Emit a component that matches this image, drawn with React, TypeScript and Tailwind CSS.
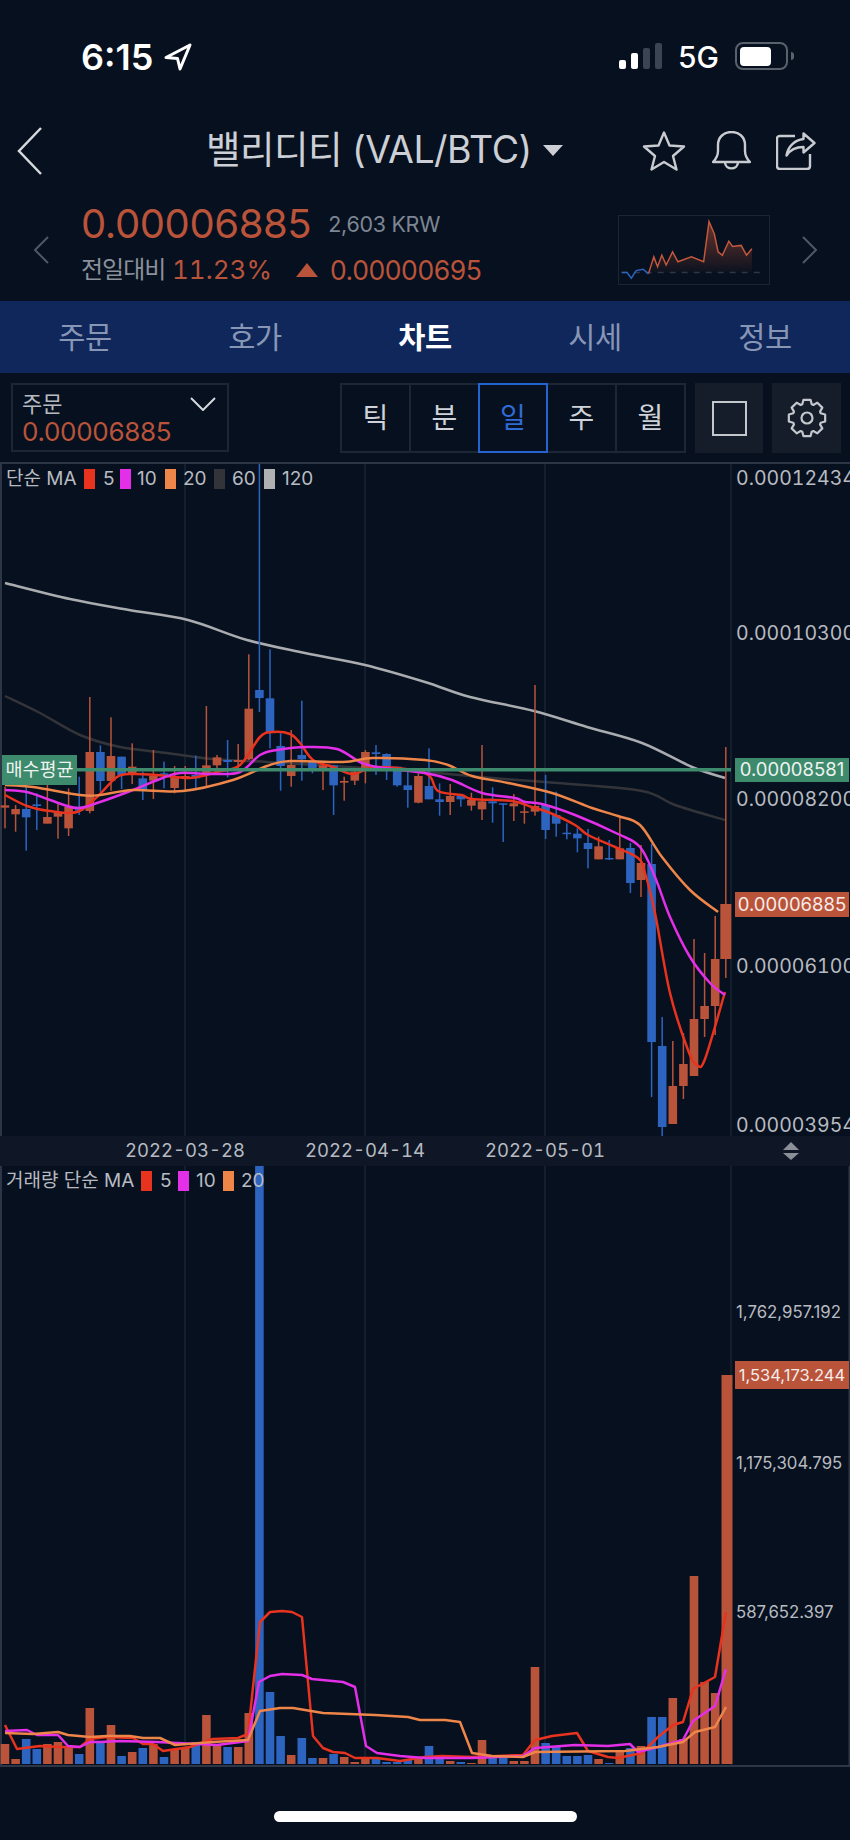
const RED = '#b9533a'
const BLUE = '#2c64c0'

// [wickTop, wickBottom, bodyTop, bodyBottom] in page pixels, r = up, b = down
type Candle = ['r' | 'b', number, number, number, number]

const z = (c: 'r' | 'b', a: number, b: number, d: number, e: number): Candle => [
  c,
  640 + a / 3,
  640 + b / 3,
  640 + d / 3,
  640 + e / 3,
]

const candles: Candle[] = [
  z('r', 440, 565, 496, 503),
  z('r', 495, 575, 507, 523),
  z('b', 420, 632, 507, 532),
  z('b', 460, 570, 493, 498),
  z('r', 435, 550, 531, 551),
  z('r', 492, 596, 517, 530),
  z('r', 445, 588, 501, 565),
  z('b', 410, 525, 500, 512),
  z('r', 171, 520, 336, 513),
  z('b', 316, 455, 336, 423),
  z('r', 232, 452, 348, 423),
  z('b', 350, 447, 350, 405),
  z('r', 310, 432, 380, 405),
  z('b', 395, 480, 415, 452),
  z('r', 330, 477, 408, 422),
  z('b', 365, 445, 400, 405),
  z('r', 378, 460, 408, 444),
  z('r', 378, 455, 408, 414),
  z('b', 347, 447, 405, 415),
  z('r', 198, 438, 376, 400),
  z('r', 345, 385, 352, 376),
  z('b', 300, 412, 360, 366),
  z('r', 312, 385, 360, 366),
  z('r', 43, 360, 206, 358),
  ['b', 463, 712, 690, 698],
  z('b', 28, 325, 175, 278),
  z('b', 280, 452, 318, 378),
  z('r', 270, 440, 375, 408),
  z('b', 182, 422, 345, 358),
  z('b', 360, 400, 362, 385),
  z('r', 365, 450, 376, 388),
  z('b', 375, 525, 376, 436),
  z('r', 410, 482, 423, 428),
  z('r', 385, 435, 395, 422),
  z('r', 330, 430, 336, 385),
  z('b', 315, 405, 337, 342),
  z('b', 340, 420, 342, 378),
  z('b', 380, 440, 380, 436),
  z('b', 395, 503, 436, 450),
  z('r', 400, 490, 408, 488),
  z('b', 325, 478, 438, 478),
  z('b', 430, 527, 478, 486),
  z('r', 432, 525, 468, 486),
  z('b', 465, 500, 468, 478),
  z('r', 458, 512, 480, 497),
  z('r', 315, 540, 484, 508),
  z('b', 442, 548, 484, 490),
  z('b', 490, 606, 490, 494),
  z('r', 462, 543, 490, 499),
  z('r', 495, 551, 514, 517),
  z('r', 135, 527, 498, 515),
  z('b', 405, 597, 495, 570),
  z('b', 455, 590, 525, 551),
  z('b', 550, 598, 578, 582),
  z('b', 565, 637, 581, 595),
  z('b', 567, 685, 609, 627),
  z('r', 590, 658, 619, 658),
  z('b', 600, 660, 654, 658),
  z('r', 532, 658, 625, 658),
  ['b', 843, 893, 848, 883],
  ['r', 845, 897, 863, 880],
  ['b', 844, 1097, 864, 1042],
  ['b', 1017, 1137, 1046, 1127],
  ['r', 1041, 1124, 1086, 1124],
  ['r', 1033, 1099, 1064, 1086],
  ['r', 939, 1076, 1019, 1076],
  ['r', 953, 1037, 1006, 1019],
  ['r', 916, 1035, 959, 1006],
  ['r', 747, 978, 904, 959],
]

// colour and top edge of each volume bar
const volumes: ['r' | 'b', number][] = [
  ['r', 1745], ['r', 1760], ['b', 1740], ['b', 1750], ['r', 1745], ['r', 1743], ['r', 1749], ['b', 1755],
  ['r', 1709], ['b', 1743], ['r', 1726], ['b', 1757], ['r', 1753], ['b', 1749], ['r', 1745], ['b', 1758],
  ['r', 1750], ['r', 1748], ['b', 1743], ['r', 1716], ['r', 1745], ['b', 1748], ['r', 1748], ['r', 1714],
  ['b', 1167], ['b', 1693], ['b', 1737], ['r', 1756], ['b', 1739], ['b', 1759], ['r', 1759], ['b', 1755],
  ['r', 1758], ['r', 1763], ['r', 1758], ['b', 1760], ['b', 1763], ['b', 1763], ['b', 1760], ['r', 1758],
  ['b', 1747], ['b', 1757], ['r', 1762], ['b', 1763], ['r', 1764], ['r', 1741], ['b', 1757], ['b', 1757],
  ['r', 1762], ['r', 1762], ['r', 1668], ['b', 1744], ['b', 1748], ['b', 1757], ['b', 1757], ['b', 1756],
  ['r', 1760], ['b', 1764], ['r', 1753], ['b', 1749], ['r', 1747], ['b', 1718], ['b', 1718], ['r', 1699],
  ['r', 1740], ['r', 1577], ['r', 1683], ['r', 1694], ['r', 1376],
]

const ma120 = '5,583 70,599 129,610 188,620 247,640 305,653 365,665 425,682 470,697 534,711 587,727 642,743 692,767 725,778'
const ma60 = '5,696 40,713 80,735 120,747 167,753 213,759 267,762 333,766 425,772 492,778 558,783 642,791 675,805 725,820'
const ma20 = '5,785 33,787 80,795 100,795 133,790 183,791 233,780 267,766 290,761 343,762 373,758 425,760 448,765 472,776 508,783 552,793 592,808 618,816 640,825 662,857 690,890 718,912'
const ma10 = '5,790 27,792 50,800 77,808 100,802 133,790 160,779 180,773 213,774 240,772 260,755 277,750 307,747 337,749 360,762 377,767 425,773 452,780 482,793 515,798 525,802 542,804 575,815 618,834 640,847 655,877 670,917 690,957 710,983 725,995'
const ma5 = '5,795 27,806 50,811 77,812 97,797 117,777 133,774 157,775 190,778 217,772 240,765 260,737 273,732 290,734 300,743 313,760 333,767 353,774 377,767 425,773 438,791 462,795 472,799 512,801 532,807 548,812 575,825 588,835 615,847 638,858 645,873 655,913 670,993 688,1050 697,1065 705,1059 725,992'

const vol5 = '5,1726 17,1750 40,1747 60,1748 80,1748 90,1740 107,1738 133,1739 143,1745 153,1745 163,1752 190,1748 213,1740 238,1739 248,1735 260,1623 270,1613 282,1612 292,1613 302,1618 313,1737 323,1749 333,1753 345,1754 355,1759 377,1759 400,1762 425,1758 442,1757 472,1758 523,1756 535,1741 552,1737 577,1734 588,1752 608,1758 618,1759 642,1754 658,1738 673,1726 683,1723 693,1690 715,1678 726,1613'
const vol10 = '5,1732 27,1731 37,1736 58,1736 68,1747 80,1748 90,1743 100,1743 120,1742 157,1743 177,1744 217,1746 248,1742 259,1683 270,1677 282,1675 302,1676 312,1680 343,1683 355,1688 366,1747 377,1754 400,1757 425,1759 472,1759 523,1757 535,1749 575,1746 608,1747 630,1745 638,1753 658,1748 683,1741 693,1722 715,1707 726,1670'
const vol20 = '5,1734 33,1735 58,1733 68,1736 90,1738 107,1737 130,1737 143,1739 160,1739 175,1746 213,1743 248,1741 260,1712 280,1709 293,1709 323,1714 375,1716 408,1718 420,1721 445,1721 460,1723 472,1754 492,1757 523,1758 535,1753 625,1752 658,1748 683,1743 695,1733 715,1728 726,1708'

const spark =
  '1145,818 1155,818 1163,835 1172,812 1185,808 1195,822 1205,770 1212,800 1220,765 1228,795 1240,755 1250,785 1275,770 1298,785 1308,662 1318,700 1325,755 1333,765 1345,722 1352,738 1368,735 1378,765 1388,745'

const centerX = (i: number) => 5 + 10.6 * i

// catmull-rom through the sampled points, the app draws its averages as curves
function smooth(points: string) {
  const p = points.split(' ').map((s) => s.split(',').map(Number))
  let d = `M${p[0][0]} ${p[0][1]}`
  for (let i = 0; i < p.length - 1; i++) {
    const a = p[Math.max(i - 1, 0)]
    const b = p[i]
    const c = p[i + 1]
    const e = p[Math.min(i + 2, p.length - 1)]
    d += ` C${b[0] + (c[0] - a[0]) / 6} ${b[1] + (c[1] - a[1]) / 6} ${c[0] - (e[0] - b[0]) / 6} ${c[1] - (e[1] - b[1]) / 6} ${c[0]} ${c[1]}`
  }
  return d
}

// eight blunt teeth around (20,20)
function gearPath() {
  const at = (deg: number, r: number) => {
    const a = ((deg - 90) * Math.PI) / 180
    return `${(20 + r * Math.cos(a)).toFixed(2)} ${(20 + r * Math.sin(a)).toFixed(2)}`
  }
  let d = ''
  for (let k = 0; k < 8; k++) {
    const t = k * 45
    d += `${k === 0 ? 'M' : 'L'}${at(t - 19, 14.5)} L${at(t - 11, 18.5)} L${at(t + 11, 18.5)} L${at(t + 19, 14.5)} `
  }
  return d + 'Z'
}

function Curve({ points, color, width = 2.5 }: { points: string; color: string; width?: number }) {
  return <path d={smooth(points)} fill="none" stroke={color} strokeWidth={width} strokeLinejoin="round" />
}

function Line({ points, color, width = 2.5 }: { points: string; color: string; width?: number }) {
  return <polyline points={points} fill="none" stroke={color} strokeWidth={width} strokeLinejoin="round" />
}

function GridLines({ y1, y2 }: { y1: number; y2: number }) {
  return (
    <>
      {[185, 365, 545, 731].map((x) => (
        <line key={x} x1={x} x2={x} y1={y1} y2={y2} stroke="#1a2433" strokeWidth={1.5} />
      ))}
    </>
  )
}

function AxisLabel({ top, children }: { top: number; children: string }) {
  return (
    <span className="absolute left-[736px] -translate-y-1/2 whitespace-nowrap text-[19.5px] leading-none tabular-nums text-[#b7bbc1]" style={{ top }}>
      {children}
    </span>
  )
}

function VolumeLabel({ top, children }: { top: number; children: string }) {
  return (
    <span className="absolute left-[736px] -translate-y-1/2 whitespace-nowrap text-[16.8px] leading-none text-[#b7bbc1]" style={{ top }}>
      {children}
    </span>
  )
}

function Swatch({ color }: { color: string }) {
  return <span className="h-[20px] w-[11px]" style={{ background: color }} />
}

export default function App() {
  const font = { fontFamily: 'Inter, "Noto Sans CJK KR", sans-serif' }

  return (
    <div className="h-[1840px] w-[850px] overflow-hidden bg-[#07101e] text-white" style={font}>
      {/* status bar */}
      <div className="flex h-[108px] items-start pl-[81px] pr-[56px] pt-[38px]">
        <span className="text-[36px] font-semibold leading-[38px]">6:15</span>
        <svg width="30" height="30" viewBox="0 0 30 30" className="ml-[10px] mt-[4px]">
          <path d="M27 3 L3 15.5 L14.5 16.5 L17 27 Z" fill="none" stroke="#fff" strokeWidth="3" strokeLinejoin="round" />
        </svg>
        <div className="ml-auto flex items-end gap-[5px] pb-[1px] pt-[5px]">
          <span className="h-[9px] w-[7px] rounded-[2px] bg-white" />
          <span className="h-[16px] w-[7px] rounded-[2px] bg-white" />
          <span className="h-[21px] w-[7px] rounded-[2px] bg-[#3a4452]" />
          <span className="h-[26px] w-[7px] rounded-[2px] bg-[#3a4452]" />
        </div>
        <span className="ml-[16px] text-[30px] font-medium leading-[38px]">5G</span>
        <div className="ml-[16px] mt-[4px] flex items-center gap-[3px]">
          <div className="flex h-[28px] w-[53px] items-center rounded-[8px] border-2 border-[#59616d] p-[3px]">
            <span className="h-[19px] w-[31px] rounded-[4px] bg-white" />
          </div>
          <span className="h-[8px] w-[3px] rounded-r-sm bg-[#59616d]" />
        </div>
      </div>

      {/* title row */}
      <div className="relative flex h-[85px] items-center">
        <svg width="26" height="48" viewBox="0 0 26 48" className="ml-[17px]">
          <path d="M24 1 L2 24 L24 47" fill="none" stroke="#d5d8dc" strokeWidth="2.5" />
        </svg>
        <span className="ml-[163px] text-[37.5px] font-normal tracking-[-0.5px] text-[#ccd0d6]">밸리디티 (VAL/BTC)</span>
        <span className="ml-[11px] h-0 w-0 border-x-[10px] border-t-[11px] border-x-transparent border-t-[#ccd0d6]" />
        <svg width="44" height="40" viewBox="0 0 44 40" className="ml-[79px]">
          <path d="M22 1.5 L27.5 14.5 L42 15.5 L31 25 L34.5 38.5 L22 31 L9.5 38.5 L13 25 L2 15.5 L16.5 14.5 Z" fill="none" stroke="#c8ccd1" strokeWidth="2.4" strokeLinejoin="round" />
        </svg>
        <svg width="39" height="40" viewBox="0 0 39 40" className="ml-[26px]">
          <path d="M1 31 C4 28 6 25 6 20 L6 14 C6 6 12 1 19.5 1 C27 1 33 6 33 14 L33 20 C33 25 35 28 38 31 Z" fill="none" stroke="#c8ccd1" strokeWidth="2.4" strokeLinejoin="round" />
          <path d="M13 31 C13 39.5 26 39.5 26 31" fill="none" stroke="#c8ccd1" strokeWidth="2.4" />
        </svg>
        <svg width="40" height="38" viewBox="0 0 40 38" className="ml-[25px]">
          <path d="M19 4 L4 4 Q1 4 1 7 L1 34 Q1 37 4 37 L31 37 Q34 37 34 34 L34 22" fill="none" stroke="#c8ccd1" strokeWidth="2.4" />
          <path d="M10.5 23.5 C12 14 19 8 27.5 7 L27.5 1.5 L38.5 11 L27.5 20.5 L27.5 15 C20 15 14 18 10.5 23.5 Z" fill="none" stroke="#c8ccd1" strokeWidth="2.4" strokeLinejoin="round" />
        </svg>
      </div>

      {/* price row */}
      <div className="flex h-[108px] items-start pt-[11px]">
        <svg width="16" height="28" viewBox="0 0 16 28" className="ml-[33px] mt-[32px]">
          <path d="M15 1 L2 14 L15 27" fill="none" stroke="#4d5868" strokeWidth="2" />
        </svg>
        <div className="ml-[32px] flex w-[537px] flex-col">
          <div className="flex items-start">
            <span className="text-[40px] leading-[40px] tracking-[-0.4px] text-[#b9533a]">0.00006885</span>
            <span className="ml-[17px] mt-[10px] text-[21.5px] leading-none tracking-[-0.3px] text-[#7d8694]">2,603 KRW</span>
          </div>
          <div className="mt-[12px] flex items-center">
            <span className="w-[91px] text-[24px] leading-[28px] tracking-[-1px] text-[#8a919c]">전일대비</span>
            <span className="text-[26px] leading-[28px] tabular-nums text-[#b9533a]">11.23%</span>
            <span className="ml-[24px] h-0 w-0 border-x-[11px] border-b-[14px] border-x-transparent border-b-[#b9533a]" />
            <span className="ml-[12px] text-[26.5px] leading-[28px] tracking-[-0.4px] text-[#b9533a]">0.00000695</span>
          </div>
        </div>
        <div className="mt-[11px] h-[70px] w-[152px] border border-[#1b2534]">
          <svg width="150" height="68" viewBox="1140 645 280 208" preserveAspectRatio="none">
            <defs>
              <linearGradient id="spark" x1="0" y1="0" x2="0" y2="1">
                <stop offset="0" stopColor="#b9533a" stopOpacity="0.55" />
                <stop offset="1" stopColor="#b9533a" stopOpacity="0.03" />
              </linearGradient>
            </defs>
            <polygon points={`1200,818 ${spark.split(' ').slice(6).join(' ')} 1388,818`} fill="url(#spark)" />
            <line x1="1145" x2="1410" y1="818" y2="818" stroke="#2c3646" strokeWidth="1.5" strokeDasharray="6 6" vectorEffect="non-scaling-stroke" />
            <polyline points={spark.split(' ').slice(5).join(' ')} fill="none" stroke="#c2573b" strokeWidth="1.5" vectorEffect="non-scaling-stroke" />
            <polyline points={spark.split(' ').slice(0, 6).join(' ')} fill="none" stroke="#2c64c0" strokeWidth="1.5" vectorEffect="non-scaling-stroke" />
          </svg>
        </div>
        <svg width="16" height="28" viewBox="0 0 16 28" className="ml-[32px] mt-[32px]">
          <path d="M1 1 L14 14 L1 27" fill="none" stroke="#4d5868" strokeWidth="2" />
        </svg>
      </div>

      {/* tabs */}
      <div className="grid h-[72px] grid-cols-5 items-center bg-[#10275b] text-center text-[29.5px] tracking-[-0.5px] text-[#8796b5]">
        <span>주문</span>
        <span>호가</span>
        <span className="font-bold text-white">차트</span>
        <span>시세</span>
        <span>정보</span>
      </div>

      {/* toolbar */}
      <div className="flex h-[89px] items-start pl-[11px] pt-[10px]">
        <div className="relative h-[69px] w-[218px] border-2 border-[#1c2636] pl-[9px] pt-[6px]">
          <div className="text-[22px] leading-[26px] text-[#b7bbc1]">주문</div>
          <div className="text-[26px] leading-[30px] tracking-[-0.3px] text-[#b9533a]">0.00006885</div>
          <svg width="26" height="14" viewBox="0 0 26 14" className="absolute right-[11px] top-[12px]">
            <path d="M1 1 L13 13 L25 1" fill="none" stroke="#d5d8dc" strokeWidth="2" />
          </svg>
        </div>
        <div className="ml-[111px] flex h-[70px] w-[346px] border-2 border-[#1c2636] text-[28px] text-[#cfd3d9]">
          <span className="flex flex-1 items-center justify-center border-r-2 border-[#1c2636]">틱</span>
          <span className="flex flex-1 items-center justify-center">분</span>
          <span className="-my-[2px] flex w-[70px] items-center justify-center border-2 border-[#2563d0] text-[#2f6bd6]">일</span>
          <span className="flex flex-1 items-center justify-center border-r-2 border-[#1c2636]">주</span>
          <span className="flex flex-1 items-center justify-center">월</span>
        </div>
        <div className="ml-[9px] flex h-[70px] w-[68px] items-center justify-center bg-[#151c2a]">
          <span className="h-[35px] w-[35px] border-[2.5px] border-[#c4c8cd]" />
        </div>
        <div className="ml-[9px] flex h-[70px] w-[69px] items-center justify-center bg-[#151c2a]">
          <svg width="40" height="40" viewBox="0 0 40 40">
            <path d={gearPath()} fill="none" stroke="#c4c8cd" strokeWidth="2.2" strokeLinejoin="round" />
            <circle cx="20" cy="20" r="5.5" fill="none" stroke="#c4c8cd" strokeWidth="2.2" />
          </svg>
        </div>
      </div>

      {/* price chart */}
      <div className="relative h-[674px] border-t-2 border-[#2c3646]">
        <svg width="850" height="672" viewBox="0 464 850 672" className="block">
          <rect x="0" y="464" width="2" height="672" fill="#2c3646" />
          <GridLines y1={464} y2={1136} />
          <Curve points={ma120} color="#a9adb0" />
          <Curve points={ma60} color="#33343a" />
          {candles.map(([c, wt, wb, bt, bb], i) => {
            const x = centerX(i)
            const color = c === 'r' ? RED : BLUE
            const w = i === 68 ? 11 : 8.6
            return (
              <g key={i} fill={color}>
                <rect x={x - 0.75} y={wt} width={1.5} height={wb - wt} />
                <rect x={x - w / 2} y={bt} width={w} height={Math.max(bb - bt, 1.5)} />
              </g>
            )
          })}
          <Curve points={ma5} color="#e8331f" />
          <Curve points={ma10} color="#e32fe8" />
          <Curve points={ma20} color="#ee8549" />
          <rect x="2" y="768" width="729" height="3.5" fill="#3d8a6c" />
        </svg>
        <div className="absolute left-[6px] top-[5px] flex items-center text-[19px] leading-[20px] text-[#b7bbc1]">
          <span className="w-[78px]">단순 MA</span>
          <Swatch color="#e8331f" />
          <span className="ml-[8px] w-[17px]">5</span>
          <Swatch color="#e32fe8" />
          <span className="ml-[6px] w-[28px]">10</span>
          <Swatch color="#ee8549" />
          <span className="ml-[7px] w-[31px]">20</span>
          <Swatch color="#33343a" />
          <span className="ml-[7px] w-[32px]">60</span>
          <Swatch color="#aeb0b3" />
          <span className="ml-[7px]">120</span>
        </div>
        <AxisLabel top={15}>0.00012434</AxisLabel>
        <AxisLabel top={170}>0.00010300</AxisLabel>
        <AxisLabel top={336}>0.00008200</AxisLabel>
        <AxisLabel top={503}>0.00006100</AxisLabel>
        <AxisLabel top={662}>0.00003954</AxisLabel>
        <span className="absolute left-[2px] top-[291px] flex h-[30px] w-[75px] items-center justify-center bg-[#3d8a6c] text-[18.5px] text-[#eef3f0]">
          매수평균
        </span>
        <span className="absolute left-[735px] top-[294px] flex h-[24px] w-[114px] items-center justify-center bg-[#3d8a6c] text-[18.5px] text-[#eef3f0]">
          0.00008581
        </span>
        <span className="absolute left-[735px] top-[428px] flex h-[25px] w-[114px] items-center justify-center bg-[#b9533a] text-[18.5px] text-[#f5ece9]">
          0.00006885
        </span>
      </div>

      {/* date axis */}
      <div className="relative h-[30px] bg-[#0f1726] text-[18.5px] tabular-nums text-[#b7bbc1]">
        <span className="absolute left-[185px] top-[15px] -translate-x-1/2 -translate-y-1/2">2022-03-28</span>
        <span className="absolute left-[365px] top-[15px] -translate-x-1/2 -translate-y-1/2">2022-04-14</span>
        <span className="absolute left-[545px] top-[15px] -translate-x-1/2 -translate-y-1/2">2022-05-01</span>
        <div className="absolute left-[783px] top-[6px] flex flex-col gap-[3px]">
          <span className="h-0 w-0 border-x-[8px] border-b-[8px] border-x-transparent border-b-[#8a8f98]" />
          <span className="h-0 w-0 border-x-[8px] border-t-[7px] border-x-transparent border-t-[#8a8f98]" />
        </div>
      </div>

      {/* volume chart */}
      <div className="relative h-[601px] border-b-2 border-[#2c3646]">
        <svg width="850" height="599" viewBox="0 1167 850 599" className="block">
          <rect x="0" y="1167" width="2" height="599" fill="#2c3646" />
          <rect x="848.5" y="1167" width="1.5" height="599" fill="#2c3646" />
          <GridLines y1={1167} y2={1766} />
          {volumes.map(([c, top], i) => (
            <rect
              key={i}
              x={centerX(i) - 4.3}
              y={top}
              width={i === 68 ? 11 : 8.6}
              height={1765 - top}
              fill={c === 'r' ? RED : BLUE}
            />
          ))}
          <Line points={vol5} color="#e8331f" />
          <Line points={vol10} color="#e32fe8" />
          <Line points={vol20} color="#ee8549" />
        </svg>
        <div className="absolute left-[6px] top-[5px] flex items-center text-[19px] leading-[20px] text-[#b7bbc1]">
          <span className="w-[135px]">거래량 단순 MA</span>
          <Swatch color="#e8331f" />
          <span className="ml-[8px] w-[18px]">5</span>
          <Swatch color="#e32fe8" />
          <span className="ml-[7px] w-[27px]">10</span>
          <Swatch color="#ee8549" />
          <span className="ml-[7px]">20</span>
        </div>
        <VolumeLabel top={146}>1,762,957.192</VolumeLabel>
        <VolumeLabel top={297}>1,175,304.795</VolumeLabel>
        <VolumeLabel top={446}>587,652.397</VolumeLabel>
        <span className="absolute left-[735px] top-[195px] flex h-[28px] w-[114px] items-center justify-center bg-[#b9533a] text-[16.5px] text-[#f5ece9]">
          1,534,173.244
        </span>
      </div>

      {/* home indicator */}
      <div className="flex justify-center pt-[44px]">
        <span className="h-[11px] w-[303px] rounded-full bg-white" />
      </div>
    </div>
  )
}
